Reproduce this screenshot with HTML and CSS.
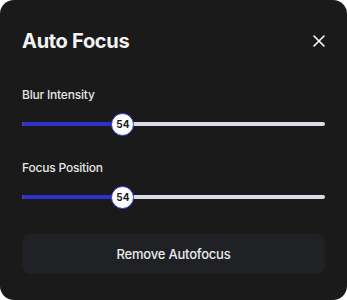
FILE: index.html
```html
<!DOCTYPE html>
<html>
<head>
<meta charset="utf-8">
<link rel="stylesheet" href="styles.css">
</head>
<body>
<div class="card">
  <div class="header">
    <h1 class="title">Auto Focus</h1>
    <button class="close" aria-label="Close">
      <svg width="14" height="14" viewBox="0 0 14 14"><path d="M2 2L12 12M12 2L2 12" stroke="#fff" stroke-width="1.6" stroke-linecap="round"/></svg>
    </button>
  </div>
  <div class="field field-first">
    <div class="label">Blur Intensity</div>
    <div class="slider">
      <div class="track"><div class="fill" style="width:33.3%"></div></div>
      <div class="thumb" style="left:33.3%">54</div>
    </div>
  </div>
  <div class="field">
    <div class="label">Focus Position</div>
    <div class="slider">
      <div class="track"><div class="fill" style="width:33.3%"></div></div>
      <div class="thumb" style="left:33.3%">54</div>
    </div>
  </div>
  <button class="remove">Remove Autofocus</button>
</div>
</body>
</html>
```
FILE: styles.css
```css
* { box-sizing: border-box; }
html, body { margin: 0; padding: 0; background: #ffffff; }
body { font-family: "Inter", "Noto Sans", sans-serif; }
.card {
  width: 347px;
  height: 300px;
  background: #1a1a1a;
  border-radius: 14px;
  padding: 28px 22px 0 22px;
  display: flex;
  flex-direction: column;
}
.header {
  display: flex;
  align-items: center;
  justify-content: space-between;
  height: 26px;
}
.title {
  margin: 0;
  color: #f4f4f4;
  font-size: 20px;
  font-weight: 650;
  letter-spacing: -0.3px;
}
.close {
  background: none;
  border: none;
  padding: 0;
  margin-right: -1px;
  width: 14px;
  height: 14px;
  display: flex;
}
.field { display: flex; flex-direction: column; }
.field-first { margin-top: 33px; }
.field + .field { margin-top: 34px; }
.label {
  color: #e6e6e6;
  font-size: 12px;
  font-weight: 500;
  line-height: 16px;
  letter-spacing: -0.2px;
}
.slider {
  position: relative;
  margin-top: 19px;
  height: 4px;
}
.track {
  height: 4px;
  border-radius: 2px;
  background: #dcdce6;
  overflow: hidden;
}
.fill {
  height: 100%;
  background: #2f31c9;
}
.thumb {
  position: absolute;
  top: 2px;
  width: 23px;
  height: 23px;
  margin-left: -11.5px;
  margin-top: -11.5px;
  border-radius: 50%;
  background: #fff;
  border: 1.5px solid #2f31c9;
  color: #1a1a2a;
  font-size: 10px;
  font-weight: 700;
  display: flex;
  align-items: center;
  justify-content: center;
}
.remove {
  margin-top: 35px;
  height: 40px;
  border: none;
  border-radius: 8px;
  background: #202125;
  color: #ececec;
  font-family: inherit;
  font-size: 13px;
  font-weight: 500;
  letter-spacing: -0.2px;
}
```
